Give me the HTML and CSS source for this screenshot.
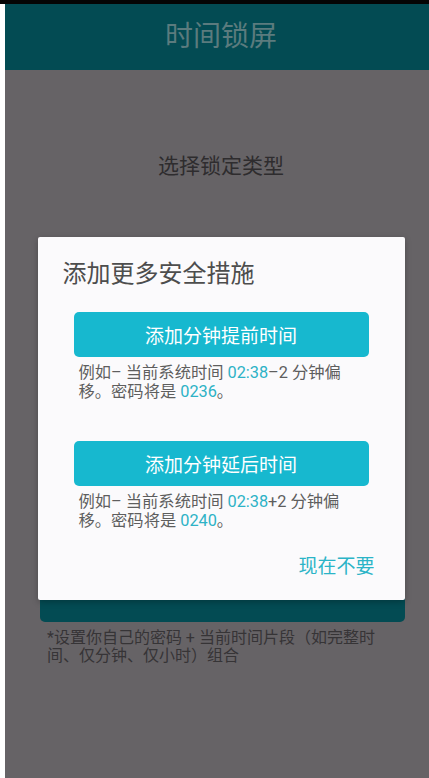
FILE: index.html
```html
<!DOCTYPE html>
<html lang="zh-CN">
<head>
<meta charset="utf-8">
<title>时间锁屏</title>
<link rel="stylesheet" href="styles.css">
</head>
<body>
<div class="screen">
  <div class="statusbar"></div>
  <div class="frame">
    <div class="app">
      <header class="appbar">时间锁屏</header>
      <main class="content">
        <h2 class="section-title">选择锁定类型</h2>
        <button class="primary-btn" type="button">设置</button>
        <p class="note">*设置你自己的密码 + 当前时间片段（如完整时<br>间、仅分钟、仅小时）组合</p>
      </main>
      <div class="overlay">
        <div class="dialog">
          <h3 class="dialog-title">添加更多安全措施</h3>
          <button class="dialog-btn" type="button">添加分钟提前时间</button>
          <p class="dialog-desc">例如– 当前系统时间 <span class="hl">02:38</span>–2 分钟偏<br>移。密码将是 <span class="hl">0236</span>。</p>
          <button class="dialog-btn second" type="button">添加分钟延后时间</button>
          <p class="dialog-desc">例如– 当前系统时间 <span class="hl">02:38</span>+2 分钟偏<br>移。密码将是 <span class="hl">0240</span>。</p>
          <div class="dialog-actions">
            <button class="text-btn" type="button">现在不要</button>
          </div>
        </div>
      </div>
    </div>
  </div>
</div>
</body>
</html>
```

FILE: styles.css
```css
* { box-sizing: border-box; }
html, body { margin: 0; padding: 0; }
body {
  font-family: Roboto, "Noto Sans CJK SC", sans-serif;
  background: #ffffff;
}
.screen {
  width: 429px;
  height: 778px;
  overflow: hidden;
  display: flex;
  flex-direction: column;
  background: #ffffff;
}
.statusbar {
  height: 4px;
  background: #050505;
  flex: none;
}
.frame {
  flex: 1;
  display: flex;
  padding-left: 5px;
  background: #ffffff;
  min-height: 0;
}
.app {
  position: relative;
  width: 432px;
  flex: none;
  display: flex;
  flex-direction: column;
  background: #666366;
}
.appbar {
  height: 66px;
  line-height: 66px;
  background: #034b53;
  color: #5b7b7e;
  font-size: 28px;
  text-align: center;
  flex: none;
}
.content {
  flex: 1;
  display: flex;
  flex-direction: column;
  background: #666366;
}
.section-title {
  margin: 82px 0 0;
  font-size: 21px;
  line-height: 28px;
  font-weight: normal;
  color: #2e2c2e;
  text-align: center;
}
.primary-btn {
  margin: 397px 32px 0 35px;
  height: 45px;
  border: none;
  border-radius: 5px;
  background: #034b53;
  color: #4d7479;
  font-family: inherit;
  font-size: 18px;
  padding: 0 0 22px;
}
.note {
  margin: 7px 0 0 42px;
  width: 360px;
  font-size: 16px;
  line-height: 18px;
  color: #363436;
}
.overlay {
  position: absolute;
  inset: 0;
  display: flex;
  justify-content: center;
  align-items: flex-start;
  padding-top: 233px;
}
.dialog {
  width: 367px;
  height: 363px;
  background: #fbfafc;
  border-radius: 2px;
  box-shadow: 0 2px 6px rgba(0,0,0,0.25);
  padding: 23px 30px 21px 25px;
  display: flex;
  flex-direction: column;
}
.dialog-title {
  margin: 0;
  font-size: 24px;
  line-height: 28px;
  font-weight: normal;
  color: #4d4d4d;
}
.dialog-btn {
  margin: 24px 6px 0 11px;
  height: 45px;
  border: none;
  border-radius: 5px;
  background: #17b8cf;
  color: #ffffff;
  font-family: inherit;
  font-size: 19px;
  padding: 0;
}
.dialog-btn.second {
  margin-top: 40px;
}
.dialog-desc {
  margin: 6px 0 0 16px;
  width: 290px;
  font-size: 16.3px;
  line-height: 19px;
  color: #5e5e5e;
}
.hl { color: #2db2c6; }
.dialog-actions {
  margin-top: auto;
  display: flex;
  justify-content: flex-end;
}
.text-btn {
  border: none;
  background: none;
  padding: 0;
  font-family: inherit;
  font-size: 19px;
  line-height: 24px;
  color: #2bb4c7;
}
```
